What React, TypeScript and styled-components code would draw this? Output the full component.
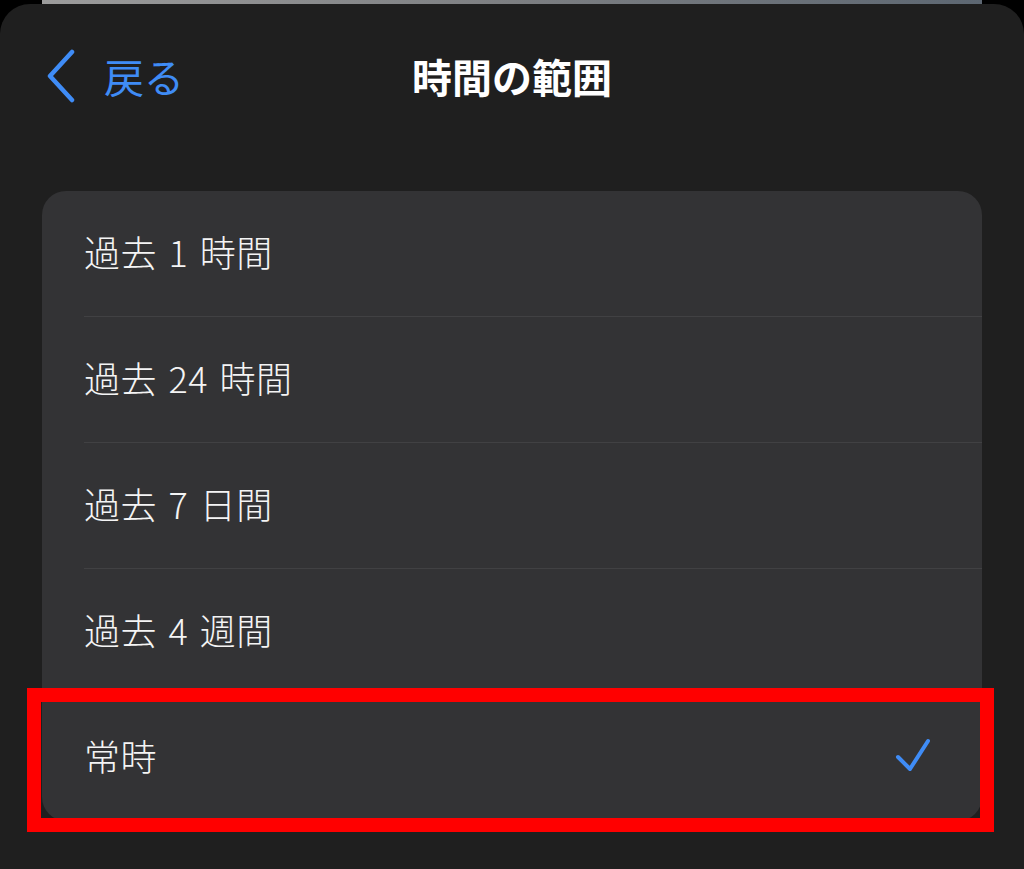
import React from "react";
import styled, { createGlobalStyle } from "styled-components";

const GlobalStyle = createGlobalStyle`
  html, body {
    margin: 0;
    padding: 0;
    background: #000;
  }
  body {
    font-family: "Noto Sans CJK JP", "Noto Sans", "Liberation Sans", sans-serif;
    -webkit-font-smoothing: antialiased;
  }
`;

const ranges = ["過去 1 時間", "過去 24 時間", "過去 7 日間", "過去 4 週間", "常時"];

const App = () => {
  const selected = 4;
  return (
    <>
      <GlobalStyle />
      <Page>
        <BehindSheet />
        <Sheet>
          <NavBar>
            <BackButton>
              <svg width="30" height="54" viewBox="0 0 30 54" fill="none">
                <path
                  d="M26 3 L4 27 L26 51"
                  stroke="#3f8cf6"
                  strokeWidth="4.5"
                  strokeLinecap="round"
                  strokeLinejoin="round"
                />
              </svg>
              <BackLabel>戻る</BackLabel>
            </BackButton>
            <Title>時間の範囲</Title>
            <span />
          </NavBar>
          <List>
            {ranges.map((label, index) => (
              <Row key={label}>
                <RowBody last={index === ranges.length - 1}>
                  <RowLabel>{label}</RowLabel>
                  {index === selected && (
                    <svg width="36" height="34" viewBox="0 0 36 34" fill="none">
                      <path
                        d="M3 19 L15 31 L33 3"
                        stroke="#3f8cf6"
                        strokeWidth="4"
                        strokeLinecap="round"
                        strokeLinejoin="round"
                      />
                    </svg>
                  )}
                </RowBody>
                {index === selected && <Highlight />}
              </Row>
            ))}
          </List>
        </Sheet>
      </Page>
    </>
  );
};

const Page = styled.div`
  width: 1024px;
  height: 869px;
  overflow: hidden;
  background: #000;
  display: flex;
  flex-direction: column;
`;
const BehindSheet = styled.div`
  height: 4px;
  margin: 0 42px;
  flex-shrink: 0;
  background: linear-gradient(90deg, #9c9c9c, #7d7f82 50%, #5d6772);
`;
const Sheet = styled.div`
  flex: 1;
  background: #1f1f1f;
  border-radius: 30px 30px 0 0;
`;
const NavBar = styled.div`
  height: 144px;
  display: grid;
  grid-template-columns: 1fr auto 1fr;
  align-items: center;
`;
const BackButton = styled.div`
  display: flex;
  align-items: center;
  gap: 28px;
  padding-left: 46px;
`;
const BackLabel = styled.span`
  color: #3f8cf6;
  font-size: 40px;
  line-height: 1;
`;
const Title = styled.h1`
  margin: 0;
  color: #fff;
  font-size: 40px;
  font-weight: 700;
  line-height: 1;
`;
const List = styled.div`
  margin: 43px 42px 0;
  background: #333335;
  border-radius: 24px;
`;
const Row = styled.div`
  position: relative;
  height: 126px;
  padding-left: 42px;
  display: flex;
`;
const RowBody = styled.div<{ last?: boolean }>`
  flex: 1;
  display: flex;
  align-items: center;
  justify-content: space-between;
  padding-right: 51px;
  padding-bottom: 6px;
  border-bottom: ${(props) => (props.last ? "none" : "1px solid #414143")};
`;
const RowLabel = styled.span`
  color: #f4f4f4;
  font-size: 36px;
  font-weight: 300;
  line-height: 1;
  word-spacing: 3px;
  letter-spacing: 0.5px;
`;
const Highlight = styled.div`
  position: absolute;
  top: -7px;
  left: -15px;
  right: -12px;
  bottom: -11px;
  border: 14px solid #ff0000;
  pointer-events: none;
`;

export default App;
